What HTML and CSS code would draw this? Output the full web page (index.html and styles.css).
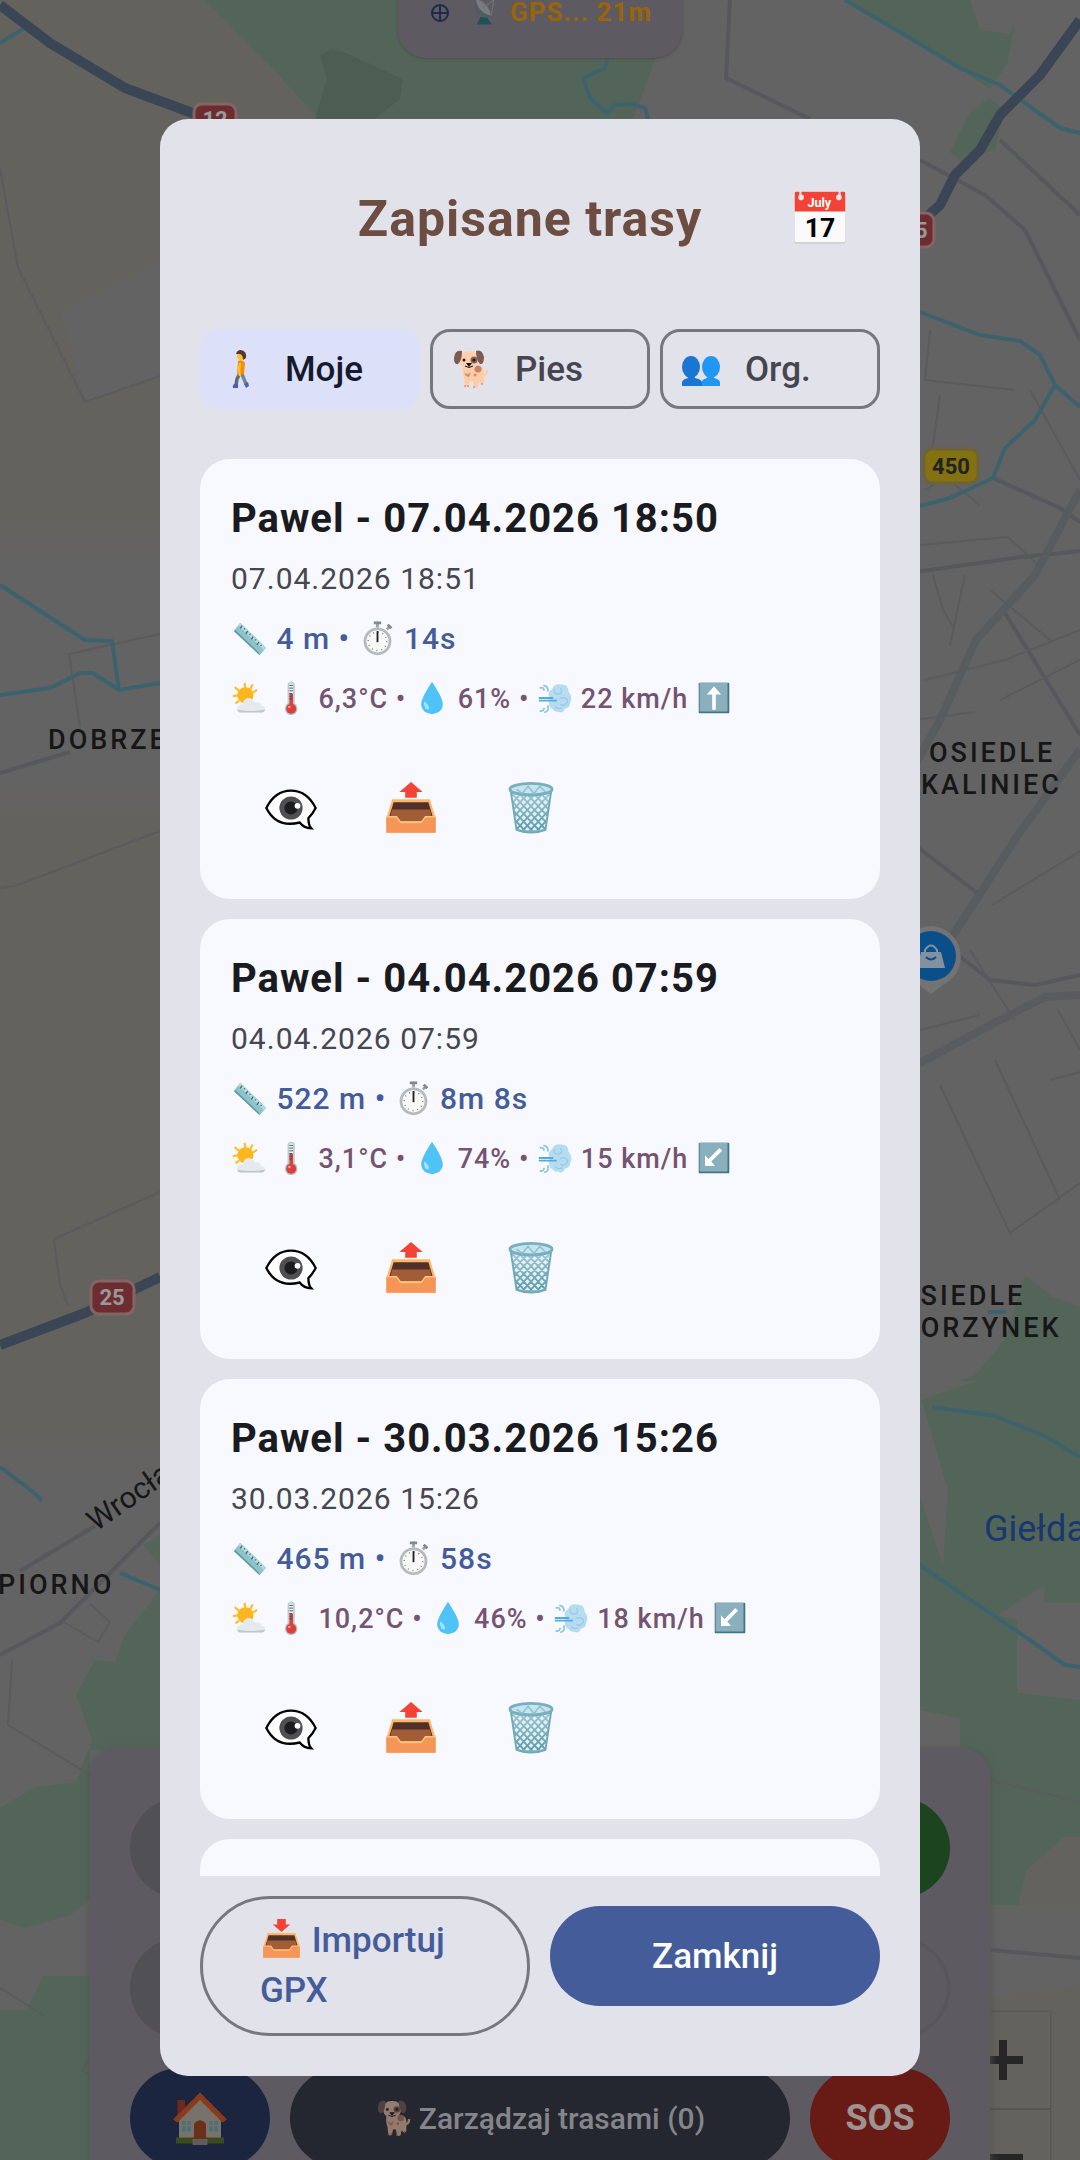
FILE: index.html
```html
<!DOCTYPE html>
<html lang="pl">
<head>
  <meta charset="UTF-8" />
  <meta name="viewport" content="width=device-width, initial-scale=1.0"/>
  <title>Zapisane trasy</title>
  <link rel="stylesheet" href="styles.css">
</head>
<body>
  <!-- Ikony -->
  <svg class="icon-defs" aria-hidden="true">
    <defs>
      <linearGradient id="steel" x1="0" y1="0" x2="0" y2="1">
        <stop offset="0" stop-color="#a5c9d6"/><stop offset="1" stop-color="#5795a5"/>
      </linearGradient>
      <linearGradient id="field-fade" gradientUnits="userSpaceOnUse" x1="0" y1="0" x2="0" y2="1480">
        <stop offset="0" stop-color="#64625c"/><stop offset=".34" stop-color="#64625c"/>
        <stop offset=".38" stop-color="#636363"/><stop offset=".53" stop-color="#636363"/>
        <stop offset=".56" stop-color="#64625c"/><stop offset=".96" stop-color="#64625c"/>
        <stop offset="1" stop-color="#636363"/>
      </linearGradient>
      <clipPath id="bin-clip"><path d="M6 8 L10 35 Q20 39 30 35 L34 8 Q20 14 6 8z"/></clipPath>
      <symbol id="i-calendar" viewBox="0 0 40 40">
        <rect x="2" y="3" width="36" height="36" rx="1" fill="#c3c6ca"/>
        <rect x="2" y="2" width="36" height="36" rx="1" fill="#fafafa"/>
        <path d="M2 16V3q0-1 1-1h34q1 0 1 1v13z" fill="#f44336"/>
        <path d="M6 1v5M34 1v5" stroke="#e2e2ea" stroke-width="1.5"/>
        <circle cx="6.500" cy="6" r="2" fill="#f6e6e8"/><circle cx="33.500" cy="6" r="2" fill="#f6e6e8"/>
        <text x="19.500" y="12.500" class="cal-month">July</text>
        <text x="20" y="34" class="cal-day">17</text>
      </symbol>
      <symbol id="i-walk" viewBox="0 0 40 40">
        <path d="M19 24 L16 30 L15 36" stroke="#5e6a75" stroke-width="3.500" fill="none"/>
        <path d="M20 23 L23 30 L25 35" stroke="#78848e" stroke-width="3.500" fill="none"/>
        <path d="M13 35h4v4h-5q-1-2 1-4zM23 35l4-2 1 4-3 2z" fill="#4a5fb5"/>
        <path d="M17 12q5-2 7 2l-1 11h-7z" fill="#fb8c00"/>
        <path d="M19 14l-1 8 1 5" stroke="#fdc02f" stroke-width="2.500" fill="none"/>
        <circle cx="20" cy="7" r="4" fill="#fcbf2d"/>
        <path d="M15 5q1-4 5-4 6 1 5 8l-3 2q0-5-3-6z" fill="#543930"/>
      </symbol>
      <symbol id="i-dog" viewBox="0 0 40 40">
        <path d="M30 27q6 0 6-6" stroke="#ffccaa" stroke-width="2.500" fill="none"/>
        <path d="M12 17q-1 7 1 12l1 8q2 3 4 0l1-5h3l1 6q2 2 4 0l1-5 2 2q3 1 3-2V22q-1-5-7-5z" fill="#ffccaa"/>
        <path d="M13 23q3 4 7 0l-2 5-3-1z" fill="#dc8a69"/>
        <circle cx="27" cy="20" r="3.500" fill="#c98263"/><circle cx="24" cy="26" r="1.500" fill="#dc8a69"/>
        <path d="M9 8q1-6 9-6t9 6q2 11-9 12Q7 19 9 8z" fill="#ffd0b0"/>
        <path d="M11 2Q4 0 3 9q0 7 4 6 4-3 4-13zM25 2q6-2 8 6 0 8-4 7-4-4-4-13z" fill="#7d5b53"/>
        <circle cx="23" cy="11" r="3.500" fill="#8a6358"/>
        <circle cx="13" cy="11" r="1.500" fill="#221d1d"/><circle cx="23" cy="11" r="1.500" fill="#221d1d"/>
        <path d="M15 14h6l-3 4z" fill="#111"/><path d="M14 17q4 3 8 0" fill="none" stroke="#111"/>
        <path d="M14 36v2M17 36v2M23 37v2M31 34v2" stroke="#e07050"/>
      </symbol>
      <symbol id="i-people" viewBox="0 0 40 40">
        <path d="M21 37v-5q1-2 5-3l1-3h5l1 3q5 1 6 4v4z" fill="#2196f3"/><ellipse cx="30" cy="18" rx="9" ry="11" fill="#2196f3"/>
        <path d="M1 37v-4q1-3 6-4l1-3h5l1 3q6 1 7 4v4z" fill="#1976d2"/><ellipse cx="10" cy="18" rx="9" ry="11" fill="#1976d2"/>
      </symbol>
      <symbol id="i-ruler" viewBox="0 0 40 40">
        <path d="M3 12 L10 3 L38 30 L31 38z" fill="#8fc3c9"/>
        <path d="M3 12 L31 38 L30 35 L5 11z" fill="#5f9ba1"/>
        <path d="M10 3 L38 30 L36 33 L8 6z" fill="#b2dce0"/>
        <path d="M12 6l-2 3M15 9l-1 1M18 12l-2 3M21 15l-1 1M24 18l-2 3M27 21l-1 1M30 24l-2 3M33 27l-1 1" stroke="#46606a" stroke-width="1.300"/>
      </symbol>
      <symbol id="i-stopwatch" viewBox="0 0 40 40">
        <path d="M20 2v6M30 10l4-3" stroke="#9aa1a4" stroke-width="3"/>
        <path d="M16 3h8M31 5l4 4" stroke="#82898c" stroke-width="3"/>
        <circle cx="20" cy="23" r="15" fill="#b4babd"/><circle cx="20" cy="23" r="12" fill="#f8f8f6"/>
        <circle cx="20" cy="23" r="10" fill="none" stroke="#777" stroke-width="1.500" stroke-dasharray="1 4.236"/>
        <path d="M20 12v12" stroke="#222" stroke-width="2"/>
      </symbol>
      <symbol id="i-sun" viewBox="0 0 40 40">
        <path d="M15 3l1 6M4 8l5 4M24 5l-3 6M2 18l6-1M5 26l4-3M29 11l-5 3" stroke="#fbc02d" stroke-width="2.500"/>
        <circle cx="16" cy="17" r="9" fill="#ffb61e"/>
        <path d="M10 36q-5-1-3-6 2-3 6-3 1-6 6-7 5 0 8 5 6-1 7 4 5 1 4 5-1 2-4 2z" fill="#e4eaed"/>
        <path d="M7 33q14 3 31 0-1 3-4 3H10q-2 0-3-3z" fill="#bfc7ca"/>
      </symbol>
      <symbol id="i-thermo" viewBox="0 0 40 40">
        <rect x="14" y="2" width="8" height="28" rx="4" fill="#b6ced4"/><rect x="16" y="4" width="4" height="24" fill="#f5f8f9"/>
        <circle cx="18" cy="32" r="7" fill="#a7c4cc"/><circle cx="18" cy="32" r="5.500" fill="#e13c36"/>
        <path d="M18 32V15" stroke="#d8443c" stroke-width="4"/>
        <path d="M16 6h4M16 9h4M16 12h4M16 15h3M16 18h3M16 21h3" stroke="#444"/>
        <circle cx="16" cy="30" r="1.500" fill="#ff9890"/>
      </symbol>
      <symbol id="i-drop" viewBox="0 0 40 40">
        <path d="M20 2Q32 20 32 27a12 11 0 0 1-24 0Q8 20 20 2z" fill="#4fc3f7"/>
        <path d="M11 24q0 9 5 9 2-3-2-7-2-2-3-2z" fill="#a6e4fc"/>
      </symbol>
      <symbol id="i-wind" viewBox="0 0 40 40">
        <path d="M18 33q-7-4-4-12-3-8 3-11 2-6 9-5 9-1 9 8 5 5 2 12 0 6-6 7-2 6-8 3-3 1-5-2z" fill="#b5dcf0"/>
        <path d="M20 10q-3 5 3 6 7-1 3-7M25 21q8-4 9 3-3 6-8 3M20 30q4 3 8 1" stroke="#9ccae4" stroke-width="1.500" fill="none"/>
        <path d="M2 20h16M2 23h20" stroke="#55abdc" stroke-width="2"/>
        <path d="M3 9q4-2 5 3M7 6q6 1 5 7M3 34q4 2 5-3M8 36q6-1 4-8" stroke="#8cc8ea" stroke-width="2" fill="none"/>
      </symbol>
      <symbol id="i-up" viewBox="0 0 40 40">
        <rect x="3" y="3" width="34" height="34" rx="1" fill="#427687"/><rect x="4" y="3" width="31" height="32" rx="1" fill="#8ab0bd"/>
        <path d="M20 7l8 9h-6v17h-4V16h-6z" fill="#fff"/>
      </symbol>
      <symbol id="i-down-left" viewBox="0 0 40 40">
        <rect x="3" y="3" width="34" height="34" rx="1" fill="#427687"/><rect x="4" y="3" width="31" height="32" rx="1" fill="#8ab0bd"/>
        <path d="M10 29V17l4 4L26 9l3 3-12 12 4 5z" fill="#fff"/>
      </symbol>
      <symbol id="i-eye" viewBox="0 0 40 40">
        <path d="M3 20Q9 8 20 8t17 12q-2 4-5 7 0 5 2 7-5 0-8-4Q10 34 3 20z" fill="#fff" stroke="#000" stroke-width="1.600"/>
        <circle cx="20" cy="20" r="8" fill="#505053"/><circle cx="20" cy="20" r="4.500" fill="#1d1d20"/><circle cx="24.500" cy="18.500" r="2" fill="#fff"/>
      </symbol>
      <symbol id="i-tray" viewBox="0 0 40 40">
        <path d="M7 14h26l4 13v10H3V27z" fill="#ffb668"/>
        <path d="M8 16h24l3 10H5z" fill="#51302a"/><path d="M7 21h26l2 8H5z" fill="#a25c37"/>
        <path d="M3 26h7l3 4h14l3-4h7v11H3z" fill="#f59558"/>
        <path d="M3 26h7l3 4h14l3-4h7" fill="none" stroke="#ffc47d"/>
      </symbol>
      <symbol id="i-outbox" viewBox="0 0 40 40">
        <use href="#i-tray" width="40" height="40"/><path d="M20 2l8 7h-4v4h-8V9h-4z" fill="#f44336"/>
      </symbol>
      <symbol id="i-inbox" viewBox="0 0 40 40">
        <use href="#i-tray" width="40" height="40"/><path d="M20 13l8-7h-4V1h-8v5h-4z" fill="#f44336"/>
      </symbol>
      <symbol id="i-bin" viewBox="0 0 40 40">
        <path d="M6 8 L10 35 Q20 39 30 35 L34 8z" fill="#e2f2f7"/>
        <g clip-path="url(#bin-clip)" stroke="url(#steel)" stroke-width="1.300">
          <path d="M-10 8l28 30M-5 8l28 30M0 8l28 30M5 8l28 30M10 8l28 30M15 8l28 30M20 8l28 30M25 8l28 30M10 8l-28 30M15 8l-28 30M20 8l-28 30M25 8l-28 30M30 8l-28 30M35 8L7 38M40 8L12 38M45 8L17 38M50 8L22 38"/>
          <path d="M6 34q14 4 28 0v5H6z" fill="#6ba6b4"/>
        </g>
        <path d="M6 8L10 35q10 4 20 0L34 8" fill="none" stroke="#72a9b8" stroke-width="1.300"/>
        <ellipse cx="20" cy="7" rx="14.500" ry="4" fill="#c4e5f0" stroke="#78aebd" stroke-width="2"/>
        <path d="M10 7l4 3 4-5 4 5 4-5 4 4" fill="none" stroke="#8fc0cf"/>
      </symbol>
      <symbol id="i-house" viewBox="0 0 40 40">
        <path d="M5 8h5v10H5z" fill="#6b2a1c"/><path d="M6 18L20 6l14 12v17H6z" fill="#77736c"/>
        <path d="M20 3l18 18-3 2L20 8 5 23l-3-2z" fill="#8a3b1c"/>
        <path d="M16 35V24q4-5 8 0v11z" fill="#6a3019"/><path d="M8 22h6v7H8zM26 22h6v7h-6z" fill="#4d7076"/>
        <path d="M11 22v7M29 22v7M8 25h6M26 25h6" stroke="#77736c"/>
        <path d="M4 33h12v4H4zM24 33h12v4H24z" fill="#3b4b1d"/><path d="M15 34h10v4H15z" fill="#5d5d5d"/>
      </symbol>
      <symbol id="i-dish" viewBox="0 0 40 40">
        <path d="M8 4q-3 16 20 22-3 6-11 4Q3 22 8 4z" fill="#4d5f63"/><path d="M8 4q16 4 20 22Q10 22 8 4z" fill="#777d80"/>
        <path d="M17 16L32 5M28 26L32 5" stroke="#6d7476" stroke-width="1.500"/><path d="M14 28l-5 10h20l-6-9z" fill="#1f5158"/>
      </symbol>
    </defs>
  </svg>

  <div class="screen">
    <!-- Mapa w tle -->
    <svg class="map" viewBox="0 0 1080 2160" preserveAspectRatio="xMidYMid slice" aria-hidden="true">
      <path d="M0 0h205l113 119v1361H0z" fill="url(#field-fade)"/>
      <path class="ground" d="M160 262L60 312 85 402 160 376z"/>
      <path class="field" d="M980 2000l100-15v175H900v-160zM1018 1905l8-35 38-33h16v68z"/>
      <path class="forest" d="M205 0h478l-28 60-22 59H318l-43-48zM845 0h125l10 30 30 4 5-10-8 40-17 25-30-20zM990 98l14 12-9 40-36 10-9-8 20-40z"/>
      <path class="forest-dark" d="M320 55l12-6 14 4 57 26-3 20-25 20h-60l12-40z"/>
      <path class="forest" d="M915 1400l60-25 30-35 20-65 28 22 27 10v530l-16 0-38 33-8 35H915z"/>
      <path class="forest" d="M160 1535l-17 10 17 20zM160 1590l-35 45-10 27-20-2-19 35 16 45-16 42-41 5-35 21v112l25 8 45-13 20-15v-150h70zM0 2010h27l16-34h60v184H0z"/>
      <path class="ground" d="M920 1395l28 95-5 76-23-70zM980 1380l-60 20v-15zM998 1615l46-30v18h36v97l-63-7v-73zM920 1710l40 8v40h-40z"/>
      <g class="street">
        <path d="M730 0l-4 78 84 41M920 160l65 35 40 35 55 110M1000 140l80 75"/>
        <path d="M915 572l107-15 58-6M993 478l67 30 20 14M1005 613l75 122M915 845l65 50M958 955l32 25 45 5 45-10M0 773l70-21M20 1571l75-45M0 1655l60-32 100-100"/>
        <path d="M990 1950l90 8"/>
      </g>
      <path class="street-wide" d="M915 765l25-45 36-80 59-65 45-85M950 940l68-105 62-85M920 1063l80-43 45-23 35-2"/>
      <g class="lane">
        <path d="M0 168l18 100 67 134 75-26"/>
        <path d="M920 545l88-8 30 28M925 680l80-20 75-30M933 575l10 35 12 20M950 645l15-70M990 590l60 50M992 905l90-55M940 1085l70 148 70-50M995 1060l65 140M1058 1010l22 40M1050 1080l30-8M920 1030l60-15M930 330l-5 50 90 10M940 395l-10 70 50 40"/>
        <path d="M160 634l-91 20 11 73M0 888l15-2 145-55M160 1192L54 1239l6 46 8 21M12 1660l-4 65 82 50M60 1620l38 22 12-20-20-18M990 1780l90 22M0 1988l45 28M92 2055l-10 15 8 5"/>
        <path d="M925 490l30-18M1030 390l50 90M1000 700l80-40M915 720l60-8M970 950l25 40 20 30"/>
      </g>
      <g class="water">
        <path d="M608 57l-3 11-22 10 7 20 17 15 8-8 17-1 13 4 3 11M845 0l60 35 55 33 40 17 60 43 20 5"/>
        <path d="M920 312l60 23 40 6 20 14 15 30 25 22M1055 385l-20 35-30 28-12 30-43 20-30 8M30 25L0 43"/>
        <path d="M0 585l85 55 27 1 7 49 41-7M0 695l50-7 30-15h13l26 17M0 1467l32 24 10 10M120 1573l40 17"/>
        <path d="M932 1407l63 9 50 20 35 21M920 1565l40 28 70 47 35 25 15 2M988 1312h18"/>
      </g>
      <path class="highway" d="M0 5l50 38 75 45 70 26M1080 20l-40 55-40 40-20 35-25 25-15 30-20 18M0 1345l85-32 75-36"/>
      <g class="shield">
        <rect x="194" y="104" width="42" height="34" rx="8"/><text x="215" y="127">12</text>
        <rect x="892" y="213" width="42" height="34" rx="8"/><text x="915" y="238">25</text>
        <rect x="91" y="1281" width="43" height="33" rx="8"/><text x="112" y="1305">25</text>
      </g>
      <g class="shield shield-yellow">
        <rect x="924" y="449" width="54" height="34" rx="8"/><text x="951" y="474">450</text>
      </g>
      <g class="place">
        <text x="48" y="749">DOBRZEC</text>
        <text x="929" y="762">OSIEDLE</text>
        <text x="921" y="794">KALINIEC</text>
        <text x="899" y="1305">OSIEDLE</text>
        <text x="901" y="1337">KORZYNEK</text>
        <text x="-2" y="1594">PIORNO</text>
      </g>
      <text class="road-name" transform="translate(96 1532) rotate(-35)">Wrocławska</text>
      <text class="poi" x="984" y="1541">Giełda</text>
      <path d="M931 926a31 31 0 0 1 12 59l-12 9-12-9a31 31 0 0 1 12-59z" fill="#737373"/>
      <circle cx="931" cy="956" r="25" fill="#0b4f8a"/>
      <path d="M921 952h20l4 16h-28z" fill="#8390a0"/><path d="M925 953v-3q6-9 12 0v3" fill="none" stroke="#8390a0" stroke-width="2"/>
      <path d="M926 957q5 5 10 0" fill="none" stroke="#0b4f8a" stroke-width="2"/>
    </svg>

    <div class="gps">
      <svg class="gps-target" viewBox="0 0 20 20"><circle cx="10" cy="10" r="8"/><path d="M10 2v16M2 10h16"/></svg>
      <svg class="gps-dish"><use href="#i-dish"/></svg>
      <span>GPS... 21m</span>
    </div>

    <div class="zoom">
      <button type="button" aria-label="Przybliż"><svg viewBox="0 0 40 40"><path d="M20 0v40M0 20h40"/></svg></button>
      <button type="button" aria-label="Oddal"><svg viewBox="0 0 40 40"><path d="M0 20h40"/></svg></button>
    </div>

    <div class="panel">
      <div class="panel-row"><span class="pill"></span><span class="pill pill-green"></span></div>
      <div class="panel-row"><span class="pill"></span><span class="pill pill-outline"></span></div>
      <div class="panel-row panel-main">
        <button type="button" class="pill pill-home" aria-label="Dom"><svg><use href="#i-house"/></svg></button>
        <button type="button" class="pill pill-manage"><svg><use href="#i-dog"/></svg> Zarządzaj trasami (0)</button>
        <button type="button" class="pill pill-sos">SOS</button>
      </div>
    </div>

    <main class="dialog" role="dialog" aria-labelledby="tytul">
      <header class="dialog-header">
        <h1 id="tytul">Zapisane trasy</h1>
        <button type="button" class="calendar" aria-label="Kalendarz"><svg><use href="#i-calendar"/></svg></button>
      </header>

      <nav class="tabs">
        <button type="button" class="tab active"><svg><use href="#i-walk"/></svg>Moje</button>
        <button type="button" class="tab"><svg><use href="#i-dog"/></svg>Pies</button>
        <button type="button" class="tab"><svg><use href="#i-people"/></svg>Org.</button>
      </nav>

      <section class="routes">
        <article class="route">
          <h2>Pawel - 07.04.2026 18:50</h2>
          <p class="date">07.04.2026 18:51</p>
          <p class="stats"><svg><use href="#i-ruler"/></svg> 4 m • <svg><use href="#i-stopwatch"/></svg> 14s</p>
          <p class="weather"><svg><use href="#i-sun"/></svg> <svg><use href="#i-thermo"/></svg> 6,3°C • <svg><use href="#i-drop"/></svg> 61% • <svg><use href="#i-wind"/></svg> 22 km/h <svg><use href="#i-up"/></svg></p>
          <div class="actions">
            <button type="button" aria-label="Pokaż"><svg><use href="#i-eye"/></svg></button>
            <button type="button" aria-label="Eksportuj"><svg><use href="#i-outbox"/></svg></button>
            <button type="button" aria-label="Usuń"><svg><use href="#i-bin"/></svg></button>
          </div>
        </article>

        <article class="route">
          <h2>Pawel - 04.04.2026 07:59</h2>
          <p class="date">04.04.2026 07:59</p>
          <p class="stats"><svg><use href="#i-ruler"/></svg> 522 m • <svg><use href="#i-stopwatch"/></svg> 8m 8s</p>
          <p class="weather"><svg><use href="#i-sun"/></svg> <svg><use href="#i-thermo"/></svg> 3,1°C • <svg><use href="#i-drop"/></svg> 74% • <svg><use href="#i-wind"/></svg> 15 km/h <svg><use href="#i-down-left"/></svg></p>
          <div class="actions">
            <button type="button" aria-label="Pokaż"><svg><use href="#i-eye"/></svg></button>
            <button type="button" aria-label="Eksportuj"><svg><use href="#i-outbox"/></svg></button>
            <button type="button" aria-label="Usuń"><svg><use href="#i-bin"/></svg></button>
          </div>
        </article>

        <article class="route">
          <h2>Pawel - 30.03.2026 15:26</h2>
          <p class="date">30.03.2026 15:26</p>
          <p class="stats"><svg><use href="#i-ruler"/></svg> 465 m • <svg><use href="#i-stopwatch"/></svg> 58s</p>
          <p class="weather"><svg><use href="#i-sun"/></svg> <svg><use href="#i-thermo"/></svg> 10,2°C • <svg><use href="#i-drop"/></svg> 46% • <svg><use href="#i-wind"/></svg> 18 km/h <svg><use href="#i-down-left"/></svg></p>
          <div class="actions">
            <button type="button" aria-label="Pokaż"><svg><use href="#i-eye"/></svg></button>
            <button type="button" aria-label="Eksportuj"><svg><use href="#i-outbox"/></svg></button>
            <button type="button" aria-label="Usuń"><svg><use href="#i-bin"/></svg></button>
          </div>
        </article>

        <article class="route"></article>
      </section>

      <footer class="dialog-footer">
        <button type="button" class="import"><svg><use href="#i-inbox"/></svg> Importuj GPX</button>
        <button type="button" class="close">Zamknij</button>
      </footer>
    </main>
  </div>
</body>
</html>
```
FILE: styles.css
```css
* { box-sizing: border-box; }
body { margin: 0; font-family: Roboto, "Noto Sans", sans-serif; background: #636363; }
h1, h2, p { margin: 0; }
button { font: inherit; letter-spacing: inherit; color: inherit; border: none; background: none; padding: 0; cursor: pointer; }
.icon-defs { position: absolute; width: 0; height: 0; }
.cal-month { font-size: 9px; font-weight: 700; fill: #fff; text-anchor: middle; }
.cal-day { font-size: 19px; font-weight: 700; fill: #000; text-anchor: middle; }

.screen {
  position: relative; display: flex; height: 100vh; overflow: hidden;
  padding: 119px 160px 84px;
}

/* mapa */
.map { position: absolute; inset: 0; width: 100%; height: 100%; fill: none; stroke-linejoin: round; }
.field { fill: #64625c; }
.ground { fill: #636363; }
.forest { fill: #536559; }
.forest-dark { fill: #4c5e51; }
.street { stroke: #56585b; stroke-width: 4; }
.street-wide { stroke: #595c5e; stroke-width: 8; }
.lane { stroke: #5a5b5d; stroke-width: 2; }
.water { stroke: #3c636d; stroke-width: 4; }
.highway { stroke: #3a4655; stroke-width: 10; }
.shield { font-size: 22px; font-weight: 700; text-anchor: middle; }
.shield rect { fill: #6d2d30; stroke: #856466; stroke-width: 3; }
.shield text { fill: #999; }
.shield-yellow rect { fill: #83720f; stroke: #6e6238; }
.shield-yellow text { fill: #222; }
.place { font-size: 27px; font-weight: 500; letter-spacing: 3px; fill: #161616; }
.road-name { font-size: 30px; fill: #161616; }
.poi { font-size: 36px; fill: #18386f; }

/* elementy nad mapą */
.gps {
  position: absolute; top: -42px; left: 50%; transform: translateX(-50%);
  display: flex; align-items: flex-end; width: 284px; height: 100px; padding: 0 0 30px 32px;
  background: #5d5b61; border-radius: 28px; box-shadow: 0 1px 3px #4c4c4c;
  color: #9a650a; font-size: 26px; font-weight: 700; line-height: 32px; letter-spacing: 1px;
}
.gps-target { width: 20px; height: 30px; fill: none; stroke: #1f2a4b; stroke-width: 2; }
.gps-dish { width: 30px; height: 34px; margin: 0 10px 0 20px; }
.zoom { position: absolute; right: 30px; bottom: -48px; width: 94px; background: #64625c; box-shadow: 0 0 3px #4a4a46; }
.zoom button { display: flex; align-items: center; justify-content: center; width: 100%; height: 98px; border-bottom: 2px solid #565550; }
.zoom svg { width: 40px; height: 40px; stroke: #262626; stroke-width: 8; }
.panel {
  position: absolute; left: 90px; right: 90px; bottom: -38px;
  display: flex; flex-direction: column; gap: 40px; padding: 50px 40px 30px;
  background: #5d5b61; border-radius: 28px; box-shadow: 0 2px 8px #4f5250;
}
.panel-row { display: flex; gap: 20px; }
.panel-main { margin-top: -10px; }
.pill {
  flex: 1; display: flex; align-items: center; justify-content: center;
  height: 100px; border-radius: 50px; background: #515055;
}
.pill-green { background: #1b441f; }
.pill-outline { background: none; border: 3px solid #57565c; }
.pill-home { flex: 0 0 140px; background: #1b2540; }
.pill-home svg { width: 60px; height: 60px; }
.pill-manage { gap: 6px; background: #24272f; color: #85868b; font-size: 30px; font-weight: 500; }
.pill-manage svg { width: 38px; height: 38px; opacity: .5; }
.pill-sos { flex: 0 0 140px; background: #681a14; color: #9c9392; font-size: 36px; font-weight: 700; }

/* okno z trasami */
.dialog {
  position: relative; flex: 1; display: flex; flex-direction: column;
  padding: 40px; background: #e2e2ea; border-radius: 28px;
}
.dialog-header { display: grid; grid-template-columns: 100px 1fr 120px; align-items: center; height: 120px; }
.dialog-header h1 { grid-column: 2; text-align: center; white-space: nowrap; color: #6d4c41; font-size: 50px; font-weight: 700; letter-spacing: 1px; }
.calendar { display: flex; justify-content: center; padding-bottom: 4px; }
.calendar svg { width: 56px; height: 56px; }

.tabs { display: grid; grid-template-columns: repeat(3, 1fr); gap: 10px; margin: 50px 0; }
.tab {
  display: flex; align-items: center; gap: 24px; height: 80px; padding: 0 18px;
  border: 3px solid #777780; border-radius: 20px;
  color: #45464f; font-size: 35px; font-weight: 500;
}
.tab svg { width: 40px; height: 40px; }
.tab.active { background: #dce1f9; border-color: #dce1f9; color: #151b2c; }

.routes { flex: 1; min-height: 0; overflow-y: auto; scrollbar-width: none; display: flex; flex-direction: column; gap: 20px; }
.route { flex: none; min-height: 440px; padding: 30px 31px 31px; background: #f8f9ff; border-radius: 30px; line-height: 60px; letter-spacing: 1px; }
.route h2 { font-size: 40px; font-weight: 700; color: #1a1b20; }
.date { font-size: 30px; color: #45464f; }
.stats { font-size: 30px; font-weight: 500; color: #445c99; }
.stats svg { width: 37px; height: 37px; vertical-align: -8px; }
.weather { font-size: 27px; font-weight: 500; color: #745470; }
.weather svg { width: 36px; height: 36px; vertical-align: -8px; }
.stats, .weather { height: 60px; white-space: nowrap; }
.actions { display: flex; margin-top: 19px; }
.actions button { display: flex; align-items: center; justify-content: center; width: 120px; height: 120px; }
.actions svg { width: 58px; height: 58px; }

.dialog-footer { display: grid; grid-template-columns: 1fr 1fr; align-items: start; gap: 20px; margin-top: 20px; font-size: 35px; font-weight: 500; }
.import {
  min-height: 140px; padding: 17px 57px; text-align: left; line-height: 50px;
  border: 3px solid #777780; border-radius: 70px; color: #445c99;
}
.import svg { width: 43px; height: 43px; vertical-align: -9px; }
.close { height: 100px; margin: 10px 0; border-radius: 50px; background: #445c99; color: #fff; }
```
